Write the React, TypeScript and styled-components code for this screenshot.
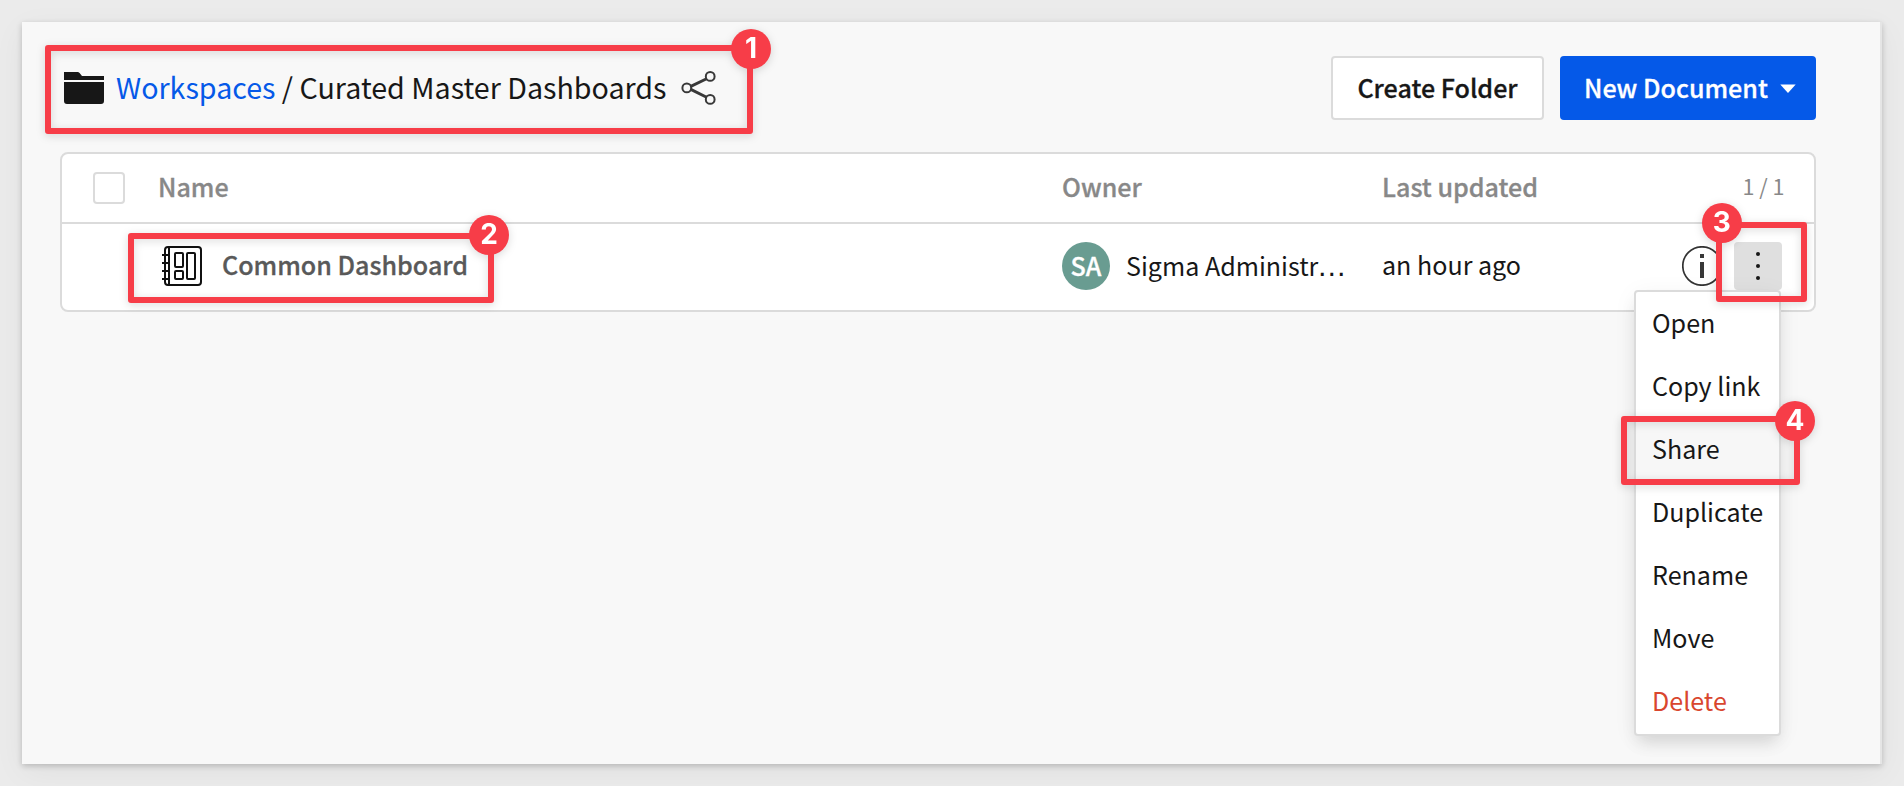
import React from 'react';
import styled, { createGlobalStyle, css } from 'styled-components';

const GlobalStyle = createGlobalStyle`
  *, *::before, *::after { box-sizing: border-box; }
  body {
    margin: 0;
    background: #ebebeb;
    color: #171717;
    font-family: 'Noto Sans CJK SC', 'Noto Sans CJK JP', sans-serif;
    font-size: 25.07px;
    line-height: 36px;
  }
`;

const semibold = css`
  font-weight: 500;
  -webkit-text-stroke: 0.3px currentColor;
`;

const Page = styled.div`
  position: relative;
  height: 786px;
  padding: 22px;
  overflow: hidden;
`;

const Panel = styled.main`
  width: 1860px;
  height: 742px;
  padding: 34px 64px 0 38px;
  background: #f8f8f8;
  border-right: 2px solid #e5e5e5;
  box-shadow: 0 2px 6px rgba(0, 0, 0, 0.2), 0 8px 30px rgba(0, 0, 0, 0.05);
`;

const Header = styled.header`
  display: flex;
  align-items: center;
  height: 64px;
  gap: 16px;
  margin-bottom: 32px;
`;

const Breadcrumb = styled.h1`
  display: flex;
  flex: 1;
  align-items: center;
  margin: 0;
  padding-left: 4px;
  font-size: 28.65px;
  font-weight: 400;
  line-height: 40px;
  white-space: pre;
`;

const FolderIcon = styled.svg`
  margin-right: 12px;
`;

const ShareIcon = styled.svg`
  margin-left: 14px;
`;

const Crumb = styled.span<{ $link?: boolean }>`
  padding-bottom: 3px;
  color: ${(p) => (p.$link ? '#0559e8' : '#171717')};
`;

const Button = styled.button<{ $primary?: boolean }>`
  display: flex;
  align-items: center;
  justify-content: ${(p) => (p.$primary ? 'flex-start' : 'center')};
  width: ${(p) => (p.$primary ? 256 : 213)}px;
  height: 64px;
  padding: 0 0 0 ${(p) => (p.$primary ? 22 : 0)}px;
  gap: 12.5px;
  border: 2px solid ${(p) => (p.$primary ? '#0559e8' : '#dbdbdb')};
  border-radius: 4px;
  background: ${(p) => (p.$primary ? '#0559e8' : '#fff')};
  color: ${(p) => (p.$primary ? '#fff' : '#171717')};
  font: inherit;
  ${semibold}
`;

const ButtonLabel = styled.span`
  padding-bottom: 2px;
`;

const Table = styled.section`
  width: 1756px;
  border: 2px solid #dbdbdb;
  border-radius: 8px;
  background: #fff;
`;

const Row = styled.div<{ $head?: boolean }>`
  display: grid;
  grid-template-columns: 96px 904px 320px 300px 1fr;
  align-items: center;
  height: ${(p) => (p.$head ? 70 : 86)}px;
  padding-bottom: ${(p) => (p.$head ? 0 : 2)}px;
  border-bottom: ${(p) => (p.$head ? '2px solid #dbdbdb' : 'none')};
  color: ${(p) => (p.$head ? '#888' : '#171717')};
`;

const ColumnTitle = styled.span`
  padding-bottom: 4px;
  ${semibold}
`;

const Checkbox = styled.span`
  width: 32px;
  height: 32px;
  margin-left: 31px;
  border: 2px solid #dbdbdb;
  border-radius: 4px;
`;

const Count = styled.span`
  justify-self: end;
  padding: 0 29.5px 4px 0;
  font-size: 21.5px;
`;

const DocumentCell = styled.div`
  display: flex;
  align-items: center;
  gap: 20px;
  padding-left: 4px;
  color: #595959;
`;

const DocumentName = styled.span`
  padding-bottom: 4px;
  ${semibold}
`;

const UpdatedCell = styled.span`
  padding-bottom: 4px;
`;

const OwnerCell = styled.div`
  display: flex;
  align-items: center;
  gap: 16px;
`;

const Avatar = styled.span`
  display: flex;
  align-items: center;
  justify-content: center;
  width: 48px;
  height: 48px;
  padding-bottom: 3px;
  border-radius: 50%;
  background: #699c91;
  color: #fff;
  ${semibold}
`;

const OwnerName = styled.span`
  padding-bottom: 2px;
  white-space: nowrap;
`;

const Ellipsis = styled.span`
  margin-left: -1.5px;
  font-family: 'Liberation Sans', sans-serif;
  font-size: 30px;
  line-height: 0;
`;

const Actions = styled.div`
  display: flex;
  align-items: center;
  gap: 12px;
`;

const MoreButton = styled.button`
  display: flex;
  align-items: center;
  justify-content: center;
  width: 48px;
  height: 48px;
  padding: 0;
  border: 0;
  border-radius: 4px;
  background: #dfdfdf;
`;

const Menu = styled.ul`
  position: absolute;
  top: 290px;
  left: 1634px;
  display: flex;
  flex-direction: column;
  width: 147px;
  height: 446px;
  margin: 0;
  padding: 0;
  list-style: none;
  border: 2px solid #dbdbdb;
  border-radius: 4px;
  background: #fff;
  box-shadow: 0 10px 16px -4px rgba(0, 0, 0, 0.12), 0 4px 24px rgba(0, 0, 0, 0.05);
`;

const MenuItem = styled.li<{ $active?: boolean; $danger?: boolean }>`
  display: flex;
  flex: 1;
  align-items: center;
  padding: 0 0 4px 16px;
  background: ${(p) => (p.$active ? '#f7f7f7' : 'transparent')};
  color: ${(p) => (p.$danger ? '#d9462e' : '#171717')};
  white-space: nowrap;
`;

const Callout = styled.div<{ $x: number; $y: number; $w: number; $h: number }>`
  position: absolute;
  left: ${(p) => p.$x}px;
  top: ${(p) => p.$y}px;
  width: ${(p) => p.$w}px;
  height: ${(p) => p.$h}px;
  border: 6px solid #f73d48;
  border-radius: 3px;
  filter: drop-shadow(0 2px 4px rgba(0, 0, 0, 0.15));
`;

const CalloutBadge = styled.span<{ $x: number; $y: number }>`
  position: absolute;
  left: ${(p) => p.$x}px;
  top: ${(p) => p.$y}px;
  display: flex;
  align-items: center;
  justify-content: center;
  width: 40px;
  height: 40px;
  padding-bottom: 1px;
  border-radius: 50%;
  background: #f73d48;
  color: #fff;
  font: 700 28px/39px Inter, sans-serif;
`;

const callouts = [
  { n: 1, box: [45, 45, 708, 89], badge: [680, -22.5] },
  { n: 2, box: [127.7, 233, 366.3, 70], badge: [335.5, -24] },
  { n: 3, box: [1716, 222, 91, 80], badge: [-20.3, -25] },
  { n: 4, box: [1621, 416, 179, 69], badge: [148, -21.5] },
];

const menuItems = ['Open', 'Copy link', 'Share', 'Duplicate', 'Rename', 'Move', 'Delete'];

export default function App() {
  return (
    <Page>
      <GlobalStyle />
      <Panel>
        <Header>
          <Breadcrumb>
            <FolderIcon width="40" height="32" viewBox="0 0 40 32" fill="#171717">
              <path d="M0 0H13.5Q14.8 0 15.6 1L18 4H40V8H0ZM0 10H40V29Q40 32 37 32H3Q0 32 0 29Z" />
            </FolderIcon>
            <Crumb $link>Workspaces</Crumb>
            <Crumb> / Curated Master Dashboards</Crumb>
            <ShareIcon width="36" height="36" viewBox="0 0 36 36" fill="none" stroke="#383838">
              <path d="M9.8 16.4L25.6 8.7M9.8 19.4L25.6 27.2" strokeWidth="2.9" />
              <g strokeWidth="2">
                <circle cx="5.8" cy="17.9" r="4.4" />
                <circle cx="29.2" cy="6.4" r="4.4" />
                <circle cx="29.2" cy="29.4" r="4.4" />
              </g>
            </ShareIcon>
          </Breadcrumb>
          <Button>
            <ButtonLabel>Create Folder</ButtonLabel>
          </Button>
          <Button $primary>
            <ButtonLabel>New Document</ButtonLabel>
            <svg width="16" height="9" viewBox="0 0 16 9" fill="#fff">
              <path d="M0.3 0.6H15.7L8 9Z" />
            </svg>
          </Button>
        </Header>
        <Table>
          <Row $head>
            <Checkbox />
            <ColumnTitle>Name</ColumnTitle>
            <ColumnTitle>Owner</ColumnTitle>
            <ColumnTitle>Last updated</ColumnTitle>
            <Count>1 / 1</Count>
          </Row>
          <Row>
            <span />
            <DocumentCell>
              <svg width="40" height="40" viewBox="0 0 40 40" fill="none" stroke="#111" strokeWidth="2">
                <rect x="3" y="1" width="36" height="38" rx="3" />
                <path d="M7 1V39M0 9H6M0 17H6M0 25H6M0 33H6" />
                <rect x="13" y="7" width="8" height="14" rx="1" />
                <rect x="13" y="25" width="8" height="8" rx="1" />
                <rect x="25" y="7" width="8" height="26" rx="1" />
              </svg>
              <DocumentName>Common Dashboard</DocumentName>
            </DocumentCell>
            <OwnerCell>
              <Avatar>SA</Avatar>
              <OwnerName>
                Sigma Administr<Ellipsis>…</Ellipsis>
              </OwnerName>
            </OwnerCell>
            <UpdatedCell>an hour ago</UpdatedCell>
            <Actions>
              <svg width="40" height="40" viewBox="0 0 40 40">
                <circle cx="20" cy="20" r="19.2" fill="none" stroke="#333" strokeWidth="1.7" />
                <path d="M18 8H22V12H18ZM18 16H22V32H18Z" fill="#383838" />
              </svg>
              <MoreButton>
                <svg width="4" height="28" viewBox="0 0 4 28" fill="#171717">
                  <circle cx="2" cy="2" r="2" />
                  <circle cx="2" cy="14" r="2" />
                  <circle cx="2" cy="26" r="2" />
                </svg>
              </MoreButton>
            </Actions>
          </Row>
        </Table>
      </Panel>
      <Menu>
        {menuItems.map((label) => (
          <MenuItem key={label} $active={label === 'Share'} $danger={label === 'Delete'}>
            {label}
          </MenuItem>
        ))}
      </Menu>
      {callouts.map(({ n, box, badge }) => (
        <Callout key={n} $x={box[0]} $y={box[1]} $w={box[2]} $h={box[3]}>
          <CalloutBadge $x={badge[0]} $y={badge[1]}>{n}</CalloutBadge>
        </Callout>
      ))}
    </Page>
  );
}
